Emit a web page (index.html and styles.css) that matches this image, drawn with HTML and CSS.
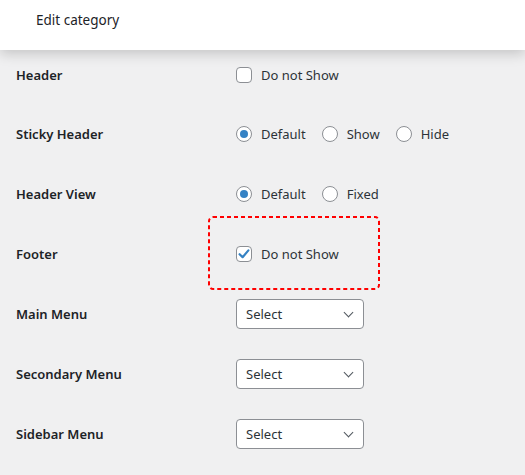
FILE: index.html
```html
<!DOCTYPE html>
<html>
<head>
  <link rel="stylesheet" href="styles.css">
</head>
<body>
  <div class="topbar">Edit category</div>
  <div class="form-table">
    <div class="row">
      <div class="label">Header</div>
      <div class="field">
        <label class="opt"><span class="box"></span>Do not Show</label>
      </div>
    </div>
    <div class="row">
      <div class="label">Sticky Header</div>
      <div class="field">
        <label class="opt"><span class="radio on"></span>Default</label>
        <label class="opt"><span class="radio"></span>Show</label>
        <label class="opt"><span class="radio"></span>Hide</label>
      </div>
    </div>
    <div class="row">
      <div class="label">Header View</div>
      <div class="field">
        <label class="opt"><span class="radio on"></span>Default</label>
        <label class="opt"><span class="radio"></span>Fixed</label>
      </div>
    </div>
    <div class="row">
      <div class="label">Footer</div>
      <div class="field highlight">
        <label class="opt">
          <span class="box">
            <svg width="14" height="14" viewBox="0 0 14 14"><path d="M2.6 7.2 L5.6 10.2 L11.4 3.4" fill="none" stroke="#3582c4" stroke-width="2.2" stroke-linecap="round" stroke-linejoin="round"/></svg>
          </span>Do not Show
        </label>
        <svg class="note" width="172" height="74" viewBox="0 0 172 74"><rect x="1" y="1" width="170" height="72" rx="4" fill="none" stroke="#f00" stroke-width="2" stroke-dasharray="4 3"/></svg>
      </div>
    </div>
    <div class="row">
      <div class="label">Main Menu</div>
      <div class="field"><div class="select">Select<span class="chev"></span></div></div>
    </div>
    <div class="row">
      <div class="label">Secondary Menu</div>
      <div class="field"><div class="select">Select<span class="chev"></span></div></div>
    </div>
    <div class="row">
      <div class="label">Sidebar Menu</div>
      <div class="field"><div class="select">Select<span class="chev"></span></div></div>
    </div>
  </div>
</body>
</html>
```

FILE: styles.css
```css
body {
  margin: 0;
  background: #f0f0f1;
  color: #1d2327;
  font-family: 'Noto Sans', 'Open Sans', sans-serif;
  font-size: 13px;
  overflow: hidden;
}
.topbar {
  position: relative;
  z-index: 1;
  height: 50px;
  box-sizing: border-box;
  padding: 11px 0 0 36px;
  background: #fff;
  color: #1d2327;
  font-size: 13.5px;
  box-shadow: 0 4px 12px rgba(0, 0, 0, 0.18);
}
.form-table {
  margin-top: -6px;
  padding-left: 16px;
}
.row {
  display: grid;
  grid-template-columns: 220px 1fr;
  height: 60px;
  align-items: center;
}
.row:first-child {
  padding-top: 2px;
  box-sizing: border-box;
}
.label {
  font-weight: 600;
}
.field {
  display: flex;
  align-items: center;
  gap: 16px;
  color: #2c3338;
}
.opt {
  display: flex;
  align-items: center;
  gap: 9px;
}
.box {
  width: 16px;
  height: 16px;
  box-sizing: border-box;
  border: 1px solid #8c8f94;
  border-radius: 4px;
  background: #fff;
  display: flex;
  align-items: center;
  justify-content: center;
}
.radio {
  width: 16px;
  height: 16px;
  box-sizing: border-box;
  border: 1px solid #8c8f94;
  border-radius: 50%;
  background: #fff;
  display: flex;
  align-items: center;
  justify-content: center;
}
.radio.on::after {
  content: "";
  width: 8px;
  height: 8px;
  border-radius: 50%;
  background: #3582c4;
}
.highlight {
  position: relative;
}
.note {
  position: absolute;
  left: -28px;
  top: calc(50% - 38px);
}
.select {
  width: 128px;
  height: 30px;
  box-sizing: border-box;
  border: 1px solid #8c8f94;
  border-radius: 4px;
  background: #fff;
  padding: 0 8px 0 9px;
  display: flex;
  align-items: center;
  justify-content: space-between;
  color: #2c3338;
}
.chev {
  width: 6px;
  height: 6px;
  border-right: 1.5px solid #50575e;
  border-bottom: 1.5px solid #50575e;
  transform: rotate(45deg);
  margin: -4px 3px 0 0;
}
```
